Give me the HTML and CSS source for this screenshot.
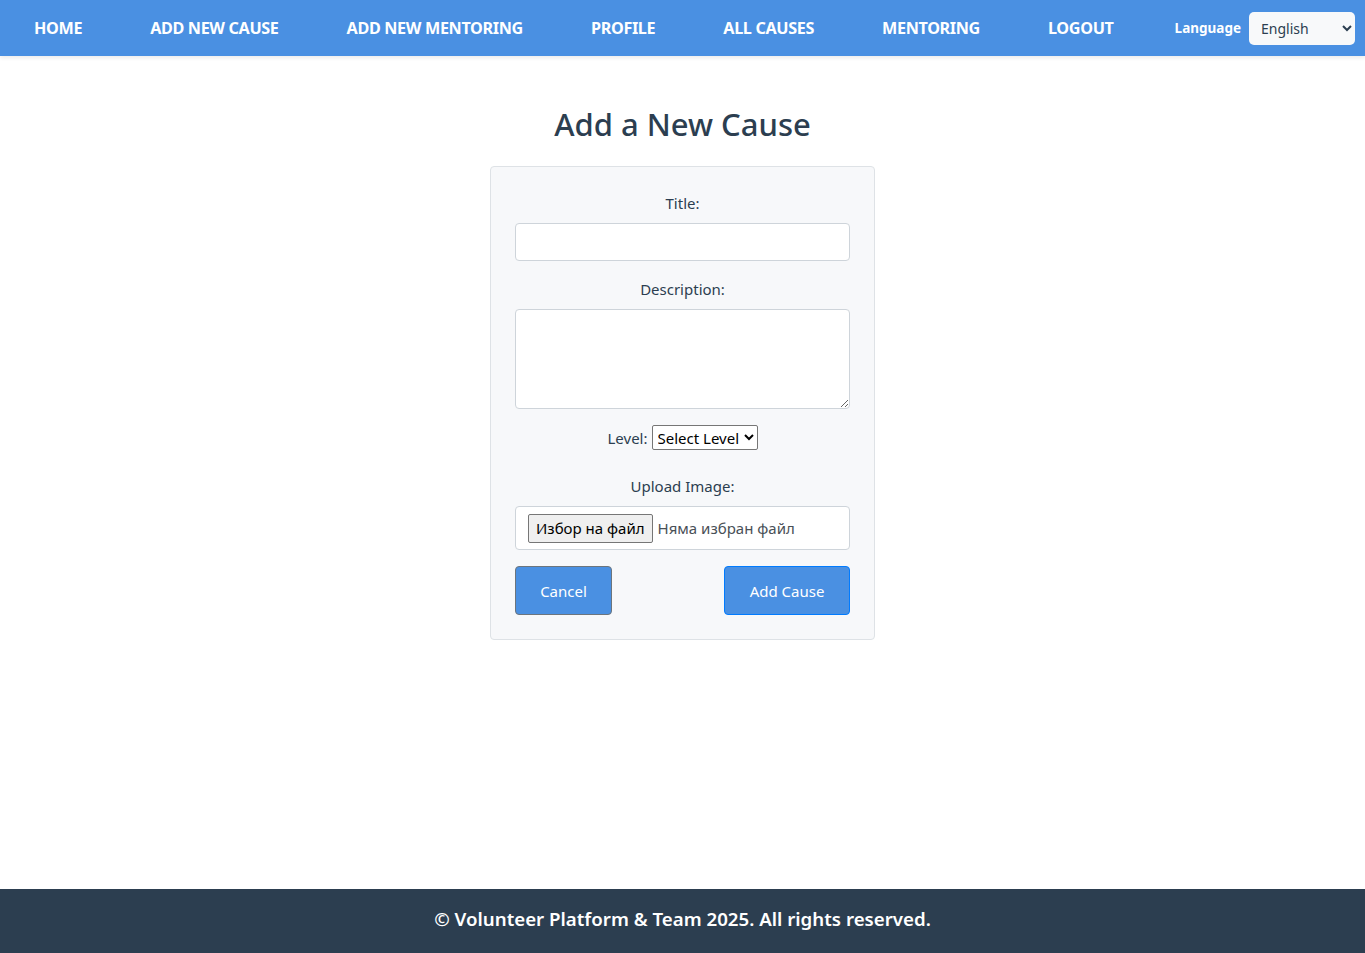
FILE: index.html
```html
<!DOCTYPE html>
<html lang="en">
<head>
<meta charset="utf-8">
<title>Add a New Cause</title>
<link rel="stylesheet" href="styles.css">
</head>
<body>
<div class="page">
  <nav class="navbar">
    <a class="nav-link" href="#">HOME</a>
    <a class="nav-link" href="#">ADD NEW CAUSE</a>
    <a class="nav-link" href="#">ADD NEW MENTORING</a>
    <a class="nav-link" href="#">PROFILE</a>
    <a class="nav-link" href="#">ALL CAUSES</a>
    <a class="nav-link" href="#">MENTORING</a>
    <a class="nav-link" href="#">LOGOUT</a>
    <div class="lang">
      <span class="lang-label">Language</span>
      <select class="lang-select">
        <option>English</option>
        <option>Български</option>
      </select>
    </div>
  </nav>

  <main class="main">
    <h1 class="page-title">Add a New Cause</h1>
    <form class="card">
      <div class="group">
        <label class="label">Title:</label>
        <input class="input" type="text">
      </div>
      <div class="group">
        <label class="label">Description:</label>
        <textarea class="textarea"></textarea>
      </div>
      <div class="level-row">
        <label class="level-label">Level:</label>
        <select class="level-select">
          <option>Select Level</option>
        </select>
      </div>
      <div class="group">
        <label class="label">Upload Image:</label>
        <div class="file-box">
          <span class="file-btn">Избор на файл</span>
          <span class="file-text">Няма избран файл</span>
        </div>
      </div>
      <div class="actions">
        <button type="button" class="btn btn-cancel">Cancel</button>
        <button type="button" class="btn btn-submit">Add Cause</button>
      </div>
    </form>
  </main>

  <footer class="footer">© Volunteer Platform &amp; Team 2025. All rights reserved.</footer>
</div>
</body>
</html>
```

FILE: styles.css
```css
* { box-sizing: border-box; }

html, body {
  margin: 0;
  padding: 0;
}

body {
  font-family: "Noto Sans", "Open Sans", sans-serif;
  color: #2c3e50;
  background: #ffffff;
}

.page {
  min-height: 100vh;
  display: flex;
  flex-direction: column;
}

.navbar {
  height: 56px;
  background: #4a90e2;
  display: flex;
  align-items: center;
  box-shadow: 0 2px 4px rgba(0,0,0,0.08);
}

.nav-link {
  color: #ffffff;
  text-decoration: none;
  font-weight: 700;
  font-size: 16.2px;
  padding: 0 34px;
  letter-spacing: -0.35px;
}

.lang {
  margin-left: auto;
  display: flex;
  align-items: center;
  gap: 8px;
  padding-right: 10px;
}

.lang-label {
  color: #ffffff;
  font-weight: 700;
  font-size: 13.5px;
}

.lang-select {
  width: 106px;
  height: 33px;
  border: none;
  border-radius: 5px;
  background: #f8f9fa;
  color: #2c3e50;
  font-family: "Noto Sans", sans-serif;
  font-size: 14px;
  padding: 0 8px;
}

.main {
  flex: 1;
  display: flex;
  flex-direction: column;
  align-items: center;
}

.page-title {
  font-size: 31px;
  font-weight: 500;
  margin: 49px 0 23px;
  line-height: 38px;
  color: #2c3e50;
}

.card {
  width: 385px;
  background: #f7f8fa;
  border: 1px solid #dee2e6;
  border-radius: 4px;
  padding: 24px 24px 24px;
}

.group {
  display: flex;
  flex-direction: column;
  margin-bottom: 16px;
}

.label {
  text-align: center;
  font-size: 15px;
  line-height: 24px;
  margin-bottom: 8px;
  color: #2c3e50;
}

.input {
  height: 38px;
  border: 1px solid #ced4da;
  border-radius: 4px;
  background: #ffffff;
  font-size: 15px;
  padding: 6px 12px;
}

.textarea {
  height: 100px;
  border: 1px solid #ced4da;
  border-radius: 4px;
  background: #ffffff;
  resize: vertical;
  font-family: inherit;
  font-size: 15px;
  padding: 6px 12px;
}

.level-row {
  display: flex;
  justify-content: center;
  align-items: center;
  gap: 4px;
  margin-bottom: 24px;
  height: 25px;
}

.level-label {
  font-size: 15px;
  color: #2c3e50;
}

.level-select {
  height: 25px;
  font-family: "Noto Sans", sans-serif;
  font-size: 15px;
  color: #000000;
  background: #ffffff;
  border: 1px solid #767676;
  border-radius: 2px;
  padding: 0 1px;
}

.file-box {
  height: 44px;
  border: 1px solid #ced4da;
  border-radius: 4px;
  background: #ffffff;
  display: flex;
  align-items: center;
  padding: 0 12px;
  gap: 5px;
}

.file-btn {
  height: 29px;
  display: inline-flex;
  align-items: center;
  padding: 0 7px;
  border: 1px solid #767676;
  border-radius: 2px;
  background: #efefef;
  color: #000000;
  font-size: 15px;
}

.file-text {
  font-size: 15px;
  color: #495057;
}

.actions {
  display: flex;
  justify-content: space-between;
}

.btn {
  height: 49px;
  background: #4a90e2;
  color: #ffffff;
  font-family: inherit;
  font-size: 15px;
  border-radius: 4px;
  cursor: pointer;
}

.btn-cancel {
  width: 97px;
  border: 1px solid #6c757d;
}

.btn-submit {
  width: 126px;
  border: 1px solid #007bff;
}

.footer {
  height: 64px;
  background: #2c3e50;
  color: #ffffff;
  font-weight: 600;
  font-size: 18.7px;
  display: flex;
  align-items: center;
  justify-content: center;
  padding-bottom: 5px;
}
```
